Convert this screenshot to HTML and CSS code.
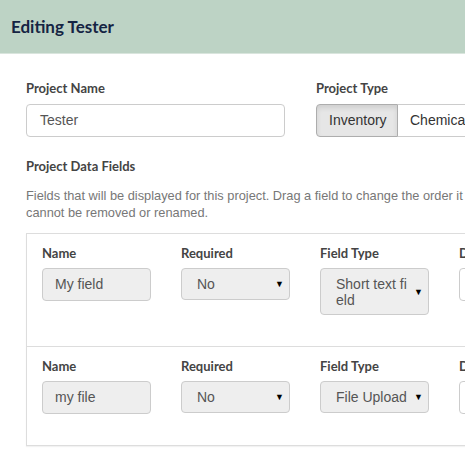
FILE: index.html
```html
<!DOCTYPE html>
<html>
<head>
<meta charset="utf-8">
<link rel="stylesheet" href="styles.css">
</head>
<body>
<header class="topbar"><h1 class="title">Editing Tester</h1></header>
<main class="content">
  <div class="top-row">
    <div class="group group-name">
      <label class="lbl">Project Name</label>
      <div class="input">Tester</div>
    </div>
    <div class="group group-type">
      <label class="lbl">Project Type</label>
      <div class="btn-group">
        <span class="btn active">Inventory</span>
        <span class="btn">Chemical</span>
      </div>
    </div>
  </div>
  <label class="lbl section">Project Data Fields</label>
  <p class="help">Fields that will be displayed for this project. Drag a field to change the order it appears. Default fields<br>cannot be removed or renamed.</p>
  <div class="card">
    <div class="field-row">
      <div class="col"><div class="lbl">Name</div><div class="input sm disabled">My field</div></div>
      <div class="col"><div class="lbl">Required</div><div class="select"><span class="sel-text">No</span><span class="caret">▼</span></div></div>
      <div class="col"><div class="lbl">Field Type</div><div class="select tall"><span class="sel-text wrap">Short text field</span><span class="caret">▼</span></div></div>
      <div class="col"><div class="lbl">Description</div><div class="input sm"></div></div>
    </div>
    <div class="field-row">
      <div class="col"><div class="lbl">Name</div><div class="input sm disabled">my file</div></div>
      <div class="col"><div class="lbl">Required</div><div class="select"><span class="sel-text">No</span><span class="caret">▼</span></div></div>
      <div class="col"><div class="lbl">Field Type</div><div class="select"><span class="sel-text">File Upload</span><span class="caret">▼</span></div></div>
      <div class="col"><div class="lbl">Description</div><div class="input sm"></div></div>
    </div>
  </div>
</main>
</body>
</html>
```
FILE: styles.css
```css
html, body {
  margin: 0;
  padding: 0;
  overflow: hidden;
  background: #fff;
}
body {
  width: 465px;
  height: 472px;
  font-family: "Liberation Sans", Arial, sans-serif;
  font-size: 14px;
  color: #555;
}
.topbar {
  height: 53px;
  background: #bdd3c5;
  border-bottom: 1px solid #d9e5dd;
  display: flex;
  align-items: center;
  padding-left: 11px;
}
.title {
  margin: 0;
  font-family: "Lato", sans-serif;
  font-weight: 700;
  font-size: 17px;
  color: #152443;
  padding-bottom: 1px;
}
.content {
  padding: 26px 0 0 26px;
  width: 700px;
}
.top-row {
  display: flex;
  gap: 31px;
}
.group-name { width: 259px; }
.lbl {
  display: block;
  font-family: "Lato", sans-serif;
  font-weight: 700;
  font-size: 13px;
  line-height: 16px;
  color: #444;
  margin-bottom: 8px;
}
.input {
  box-sizing: border-box;
  height: 33px;
  border: 1px solid #ccc;
  border-radius: 4px;
  padding: 0 13px;
  line-height: 31px;
  font-size: 14px;
  color: #555;
  background: #fff;
}
.btn-group {
  display: flex;
  height: 33px;
}
.btn {
  box-sizing: border-box;
  height: 33px;
  border: 1px solid #ccc;
  padding: 0 12px;
  line-height: 31px;
  font-size: 14px;
  color: #333;
  background: #fff;
  white-space: nowrap;
}
.btn.active {
  width: 82px;
  background: #e6e6e6;
  border-color: #adadad;
  border-radius: 4px 0 0 4px;
  box-shadow: inset 0 3px 5px rgba(0,0,0,0.1);
}
.btn + .btn { border-left: none; }
.section {
  margin-top: 21px;
  margin-bottom: 0;
}
.help {
  margin: 13px 0 0 0;
  width: 640px;
  font-size: 12.8px;
  line-height: 17px;
  color: #777;
  white-space: nowrap;
}
.card {
  margin-top: 12px;
  border: 1px solid #ddd;
  width: 620px;
  box-shadow: 0 1px 1px rgba(0,0,0,0.05);
}
.field-row {
  display: flex;
  gap: 30px;
  padding: 11px 15px 31px 15px;
  align-items: flex-start;
}
.field-row + .field-row { border-top: 1px solid #ddd; }
.col { width: 109px; flex: none; }
.col .lbl { margin-bottom: 7px; }
.input.sm { padding: 0 12px; }
.input.disabled { background: #eee; }
.select {
  box-sizing: border-box;
  min-height: 32px;
  border: 1px solid #ccc;
  border-radius: 4px;
  background: #eee;
  display: flex;
  align-items: center;
  padding: 6px 5px 6px 15px;
  font-size: 14px;
  color: #555;
}
.select.tall { padding-top: 7px; padding-bottom: 6px; }
.sel-text {
  flex: 1;
  line-height: 18px;
}
.sel-text.wrap {
  width: 72px;
  flex: none;
  word-break: break-all;
  white-space: normal;
  line-height: 16px;
  margin-right: auto;
}
.caret {
  font-size: 9px;
  color: #000;
  margin-left: auto;
  line-height: 1;
}
```
